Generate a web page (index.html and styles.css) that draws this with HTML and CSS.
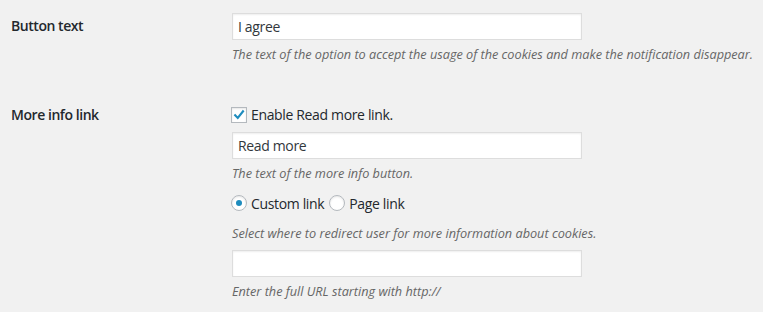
FILE: index.html
```html
<!DOCTYPE html>
<html lang="en">
<head>
<meta charset="utf-8">
<title>Cookie notice settings</title>
<link rel="stylesheet" href="styles.css">
</head>
<body>
<div class="form">
  <div class="row row-first">
    <div class="th">Button text</div>
    <div class="td">
      <input class="text-input" type="text" value="I agree">
      <p class="desc">The text of the option to accept the usage of the cookies and make the notification disappear.</p>
    </div>
  </div>
  <div class="row row-second">
    <div class="th">More info link</div>
    <div class="td">
      <label class="check-line">
        <span class="checkbox">
          <svg viewBox="0 0 16 16" width="16" height="16" aria-hidden="true"><path d="M3.6 8.2 L6.6 11.4 L12.6 3.8" fill="none" stroke="#1e8cbe" stroke-width="2.4" stroke-linecap="square" stroke-linejoin="miter"/></svg>
        </span>
        <span>Enable Read more link.</span>
      </label>
      <input class="text-input input-readmore" type="text" value="Read more">
      <p class="desc">The text of the more info button.</p>
      <div class="radio-line">
        <span class="radio checked"></span><span class="radio-label">Custom link</span>
        <span class="radio"></span><span class="radio-label">Page link</span>
      </div>
      <p class="desc desc-select">Select where to redirect user for more information about cookies.</p>
      <input class="text-input input-url" type="text" value="">
      <p class="desc">Enter the full URL starting with http://</p>
    </div>
  </div>
</div>
</body>
</html>
```
FILE: styles.css
```css
html, body {
  margin: 0;
  padding: 0;
  background: #f1f1f1;
}
body {
  font-family: "Open Sans", "Noto Sans", sans-serif;
  color: #23282d;
  font-size: 14px;
  line-height: 20px;
  letter-spacing: -0.35px;
  width: 763px;
  height: 312px;
  overflow: hidden;
}
.form {
  display: flex;
  flex-direction: column;
}
.row {
  display: flex;
}
.row-first {
  padding-top: 13px;
}
.row-second {
  margin-top: 41px;
}
.th {
  width: 232px;
  padding-left: 11px;
  box-sizing: border-box;
  font-weight: 600;
  font-size: 14px;
  line-height: 20px;
  letter-spacing: -0.45px;
  flex: none;
}
.row-first .th {
  padding-top: 3px;
}
.td {
  display: flex;
  flex-direction: column;
  align-items: flex-start;
}
.text-input {
  box-sizing: border-box;
  width: 350px;
  height: 27px;
  margin: 0;
  padding: 0 5px;
  border: 1px solid #ddd;
  background: #fff;
  box-shadow: inset 0 1px 2px rgba(0,0,0,0.07);
  font-family: inherit;
  font-size: 14px;
  letter-spacing: -0.35px;
  color: #32373c;
  outline: none;
}
.input-readmore {
  margin-top: 7px;
}
.input-url {
  margin-top: 7px;
}
.desc {
  margin: 5px 0 0;
  font-size: 12.7px;
  line-height: 19px;
  letter-spacing: 0;
  font-style: italic;
  color: #666;
}
.desc-select {
  margin-top: 10px;
}
.check-line {
  display: flex;
  align-items: center;
  height: 20px;
  gap: 4px;
  margin-left: -1px;
}
.checkbox {
  width: 16px;
  height: 16px;
  box-sizing: border-box;
  border: 1px solid #b4b9be;
  background: #fff;
  box-shadow: inset 0 1px 2px rgba(0,0,0,0.1);
  display: flex;
  align-items: center;
  justify-content: center;
}
.checkbox svg {
  width: 14px;
  height: 14px;
  display: block;
}
.radio-line {
  display: flex;
  align-items: center;
  height: 20px;
  margin-top: 11px;
  margin-left: -1px;
}
.radio {
  width: 16px;
  height: 16px;
  box-sizing: border-box;
  border: 1px solid #b4b9be;
  border-radius: 50%;
  background: #fff;
  box-shadow: inset 0 1px 2px rgba(0,0,0,0.1);
  display: flex;
  align-items: center;
  justify-content: center;
  margin-top: -2px;
}
.radio.checked::before {
  content: "";
  width: 6px;
  height: 6px;
  border-radius: 50%;
  background: #1e8cbe;
}
.radio-label {
  margin-left: 4px;
  margin-right: 5px;
}
```
